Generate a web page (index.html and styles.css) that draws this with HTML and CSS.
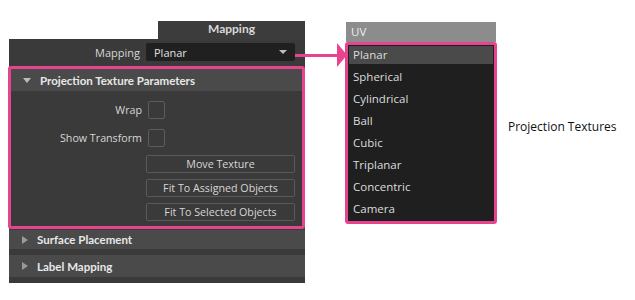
FILE: index.html
```html
<!DOCTYPE html>
<html lang="en">
<head>
    <meta charset="UTF-8">
    <title>Mapping - Projection Textures</title>
    <link rel="stylesheet" href="styles.css">
</head>
<body>

    <div class="page">

        <!-- Painel de atributos -->
        <div class="panel">
            <div class="tab">Mapping</div>

            <div class="panel-body">
                <div class="row mapping-row">
                    <span class="label">Mapping</span>
                    <div class="dropdown">
                        <span>Planar</span>
                        <span class="caret"></span>
                    </div>
                </div>

                <div class="section highlight">
                    <div class="section-header">
                        <span class="tri down"></span>
                        Projection Texture Parameters
                    </div>
                    <div class="section-content">
                        <div class="row">
                            <span class="label">Wrap</span>
                            <span class="checkbox"></span>
                        </div>
                        <div class="row">
                            <span class="label">Show Transform</span>
                            <span class="checkbox"></span>
                        </div>
                        <button class="btn">Move Texture</button>
                        <button class="btn">Fit To Assigned Objects</button>
                        <button class="btn">Fit To Selected Objects</button>
                    </div>
                </div>

                <div class="section-header closed first">
                    <span class="tri right"></span>
                    Surface Placement
                </div>
                <div class="section-header closed">
                    <span class="tri right"></span>
                    Label Mapping
                </div>
            </div>

            <!-- seta ligando o dropdown à lista -->
            <div class="connector">
                <span class="line"></span>
                <span class="head"></span>
            </div>
        </div>

        <!-- Lista de opções -->
        <div class="menu">
            <div class="menu-title">UV</div>
            <ul class="menu-list">
                <li class="active">Planar</li>
                <li>Spherical</li>
                <li>Cylindrical</li>
                <li>Ball</li>
                <li>Cubic</li>
                <li>Triplanar</li>
                <li>Concentric</li>
                <li>Camera</li>
            </ul>
        </div>

        <div class="caption">Projection Textures</div>
    </div>

</body>
</html>
```

FILE: styles.css
```css
body {
    margin: 0;
    background-color: #ffffff;
    font-family: "Open Sans", "Noto Sans", sans-serif;
    font-size: 10.7px;
    color: #d6d6d6;
}

.page {
    display: flex;
    align-items: flex-start;
    padding-top: 21px;
}

/* Painel */
.panel {
    position: relative;
    margin-left: 9px;
    width: 296px;
}

.tab {
    margin-left: 149px;
    height: 18px;
    line-height: 16px;
    background-color: #3c3c3c;
    text-align: center;
    font-family: Lato, "Open Sans", sans-serif;
    font-weight: bold;
    font-size: 12px;
    color: #d8d8d8;
}

.panel-body {
    background-color: #3a3a3a;
    padding-bottom: 6px;
}

.row {
    display: flex;
    align-items: center;
    gap: 6px;
    margin-bottom: 10px;
}

.section-content div.row:last-of-type {
    margin-bottom: 8px;
}

.label {
    width: 131px;
    text-align: right;
}

.mapping-row {
    height: 27px;
    margin-bottom: 0;
    padding-bottom: 1px;
    box-sizing: border-box;
    font-size: 11px;
}

.dropdown {
    display: flex;
    align-items: center;
    justify-content: space-between;
    width: 149px;
    height: 18px;
    padding: 0 8px;
    box-sizing: border-box;
    background-color: #202020;
    border-radius: 2px;
    color: #e0e0e0;
}

.caret {
    width: 0;
    height: 0;
    border-left: 4px solid transparent;
    border-right: 4px solid transparent;
    border-top: 4px solid #bdbdbd;
}

/* Secoes */
.section.highlight {
    margin-left: -1px;
    border: 3px solid #e8438e;
    border-radius: 3px;
}

.section-header {
    display: flex;
    align-items: center;
    height: 22px;
    padding-left: 12px;
    gap: 9px;
    background-color: #4a4a4a;
    font-family: Lato, "Open Sans", sans-serif;
    font-weight: bold;
    font-size: 11.5px;
    color: #e8e8e8;
}

.section-header.closed {
    height: 19px;
    margin-bottom: 6px;
}

.section-header.closed:last-child {
    height: 22px;
    margin-bottom: 0;
}

.section-header.first {
    margin-top: 1px;
}

.tri {
    width: 0;
    height: 0;
}

.tri.down {
    border-left: 4px solid transparent;
    border-right: 4px solid transparent;
    border-top: 5px solid #bcbcbc;
}

.tri.right {
    margin-left: 1px;
    border-top: 4px solid transparent;
    border-bottom: 4px solid transparent;
    border-left: 6px solid #9a9a9a;
}

.section-content {
    display: flex;
    flex-direction: column;
    padding: 10px 0 5px 0;
    background-color: #3a3a3a;
}

.checkbox {
    width: 15px;
    height: 16px;
    border: 1px solid #5c5c5c;
    border-radius: 2px;
    background-color: #3a3a3a;
}

.btn {
    width: 149px;
    height: 18px;
    margin: 0 0 6px 135px;
    padding: 0;
    border: 1px solid #5a5a5a;
    border-radius: 2px;
    background-color: #3a3a3a;
    font-family: inherit;
    font-size: 10.7px;
    color: #d6d6d6;
    line-height: 16px;
}

.btn:last-child {
    margin-bottom: 0;
}

/* Seta */
.connector {
    position: absolute;
    top: 22px;
    left: 286px;
    display: flex;
    align-items: center;
}

.connector .line {
    width: 42px;
    height: 3px;
    background-color: #e8438e;
}

.connector .head {
    width: 0;
    height: 0;
    border-top: 12px solid transparent;
    border-bottom: 12px solid transparent;
    border-left: 10px solid #e8438e;
}

/* Lista */
.menu {
    margin-left: 40px;
    width: 152px;
    padding-top: 1px;
}

.menu-title {
    margin: 0 1px;
    height: 20px;
    line-height: 20px;
    padding-left: 5px;
    background-color: #8c8c8c;
    font-size: 11.5px;
    color: #ececec;
}

.menu-list {
    list-style: none;
    margin: 0;
    padding: 1px 1px 0 1px;
    background-color: #1f1f1f;
    border: 3px solid #e8438e;
    border-radius: 3px;
    height: 175px;
}

.menu-list li {
    height: 22px;
    line-height: 18px;
    padding-left: 4px;
    font-size: 11.5px;
    color: #dcdcdc;
}

.menu-list li.active {
    background-color: #4a4a4a;
    height: 18px;
    margin-bottom: 4px;
}

.caption {
    margin: 97px 0 0 11px;
    font-size: 12px;
    color: #111111;
}
```
